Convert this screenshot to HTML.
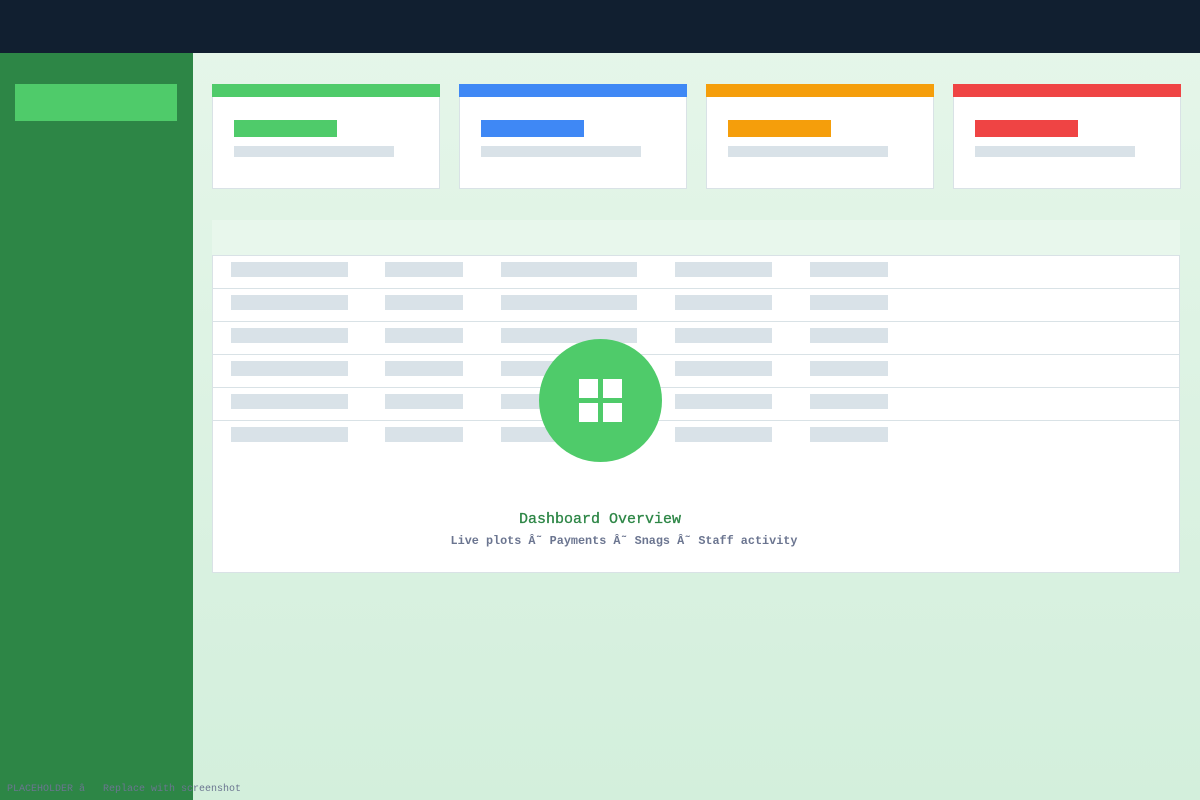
<!DOCTYPE html>
<html><head><style>
*{margin:0;padding:0;box-sizing:border-box}
body{width:1200px;height:800px;position:relative;overflow:hidden;background:linear-gradient(#e6f6ea,#d3efdc);font-family:"Liberation Mono",monospace}
.a{position:absolute}
.g{background:#d9e2e8}
</style></head><body>
<div class="a" style="left:0;top:0;width:1200px;height:53px;background:#111f30"></div>
<div class="a" style="left:0;top:53px;width:193px;height:747px;background:#2d8646"></div>
<div class="a" style="left:15px;top:84px;width:162px;height:37px;background:#4fcb6a"></div>

<div class="a" style="left:212px;top:84px;width:228px;height:105px;background:#fff;border:1px solid #d9e2e6;border-top:none"></div>
<div class="a" style="left:212px;top:84px;width:228px;height:13px;background:#4fcb6a"></div>
<div class="a" style="left:234px;top:120px;width:103px;height:17px;background:#4fcb6a"></div>
<div class="a g" style="left:234px;top:146px;width:160px;height:11px"></div>

<div class="a" style="left:459px;top:84px;width:228px;height:105px;background:#fff;border:1px solid #d9e2e6;border-top:none"></div>
<div class="a" style="left:459px;top:84px;width:228px;height:13px;background:#3f88f5"></div>
<div class="a" style="left:481px;top:120px;width:103px;height:17px;background:#3f88f5"></div>
<div class="a g" style="left:481px;top:146px;width:160px;height:11px"></div>

<div class="a" style="left:706px;top:84px;width:228px;height:105px;background:#fff;border:1px solid #d9e2e6;border-top:none"></div>
<div class="a" style="left:706px;top:84px;width:228px;height:13px;background:#f59e0b"></div>
<div class="a" style="left:728px;top:120px;width:103px;height:17px;background:#f59e0b"></div>
<div class="a g" style="left:728px;top:146px;width:160px;height:11px"></div>

<div class="a" style="left:953px;top:84px;width:228px;height:105px;background:#fff;border:1px solid #d9e2e6;border-top:none"></div>
<div class="a" style="left:953px;top:84px;width:228px;height:13px;background:#ef4444"></div>
<div class="a" style="left:975px;top:120px;width:103px;height:17px;background:#ef4444"></div>
<div class="a g" style="left:975px;top:146px;width:160px;height:11px"></div>

<div class="a" style="left:212px;top:220px;width:968px;height:35px;background:#e8f7ec"></div>
<div class="a" style="left:212px;top:255px;width:968px;height:318px;background:#fff;border:1px solid #d9e2e6"></div>
<div id="rows"></div>
<script>
var xs=[[231,117],[385,78],[501,136],[675,97],[810,78]],h='';
for(var r=0;r<6;r++){var y=255+r*33;
if(r>0)h+='<div class="a" style="left:213px;top:'+y+'px;width:966px;height:1px;background:#d9e2e6"></div>';
for(var c=0;c<5;c++)h+='<div class="a g" style="left:'+xs[c][0]+'px;top:'+(y+7)+'px;width:'+xs[c][1]+'px;height:15px"></div>';}
h+='<div class="a" style="left:213px;top:420px;width:966px;height:1px;background:#d9e2e6"></div>';
document.getElementById('rows').innerHTML=h;
</script>
<div class="a" style="left:539px;top:339px;width:123px;height:123px;border-radius:50%;background:#4fcb6a"></div>
<div class="a" style="left:579px;top:379px;width:19px;height:19px;background:#fff"></div>
<div class="a" style="left:603px;top:379px;width:19px;height:19px;background:#fff"></div>
<div class="a" style="left:579px;top:403px;width:19px;height:19px;background:#fff"></div>
<div class="a" style="left:603px;top:403px;width:19px;height:19px;background:#fff"></div>
<div class="a" style="left:0;top:511px;width:1200px;text-align:center;font-size:15px;color:#2d8646;white-space:pre;-webkit-text-stroke:0.3px #2d8646">Dashboard Overview</div>
<div class="a" style="left:248px;top:534px;width:752px;text-align:center;font-size:11.8px;font-weight:bold;color:#6b7590;white-space:pre">Live plots Â˜ Payments Â˜ Snags Â˜ Staff activity</div>
<div class="a" style="left:7px;top:784px;font-size:10px;color:#6b7590;white-space:pre">PLACEHOLDER â   Replace with screenshot</div>
</body></html>
